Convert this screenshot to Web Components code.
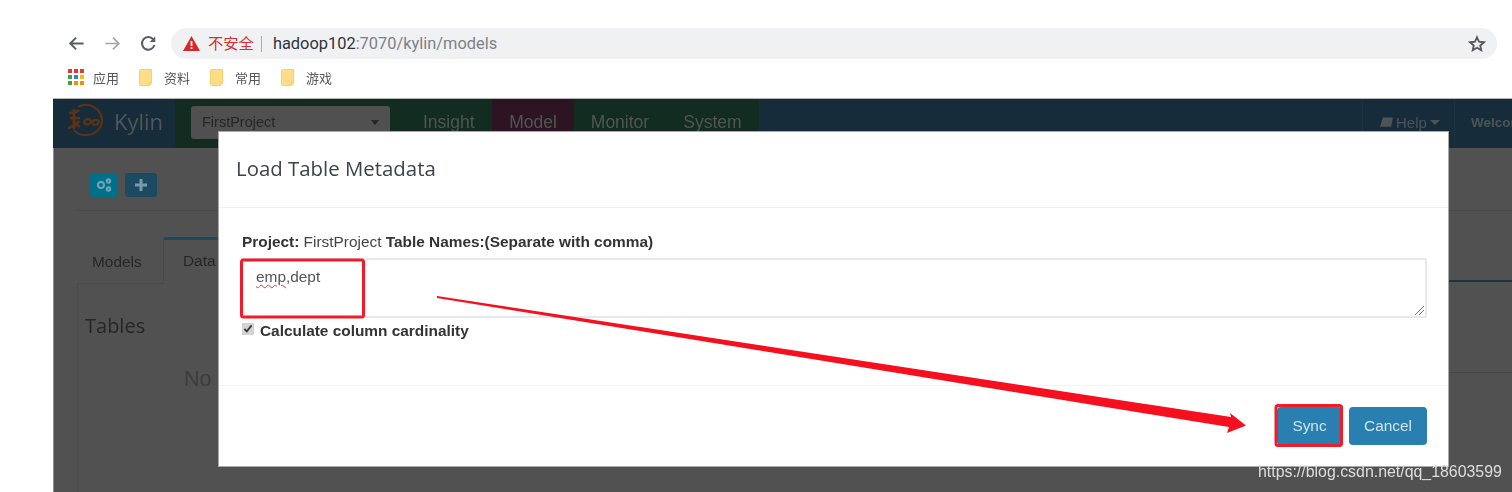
<!DOCTYPE html>
<html>
<head>
<meta charset="utf-8">
<title>Load Table Metadata</title>
<style>
  html, body { margin: 0; height: 100%; background: #fff; overflow: hidden; }
  body { font-family: "Liberation Sans", "Noto Sans CJK SC", sans-serif; }
</style>
</head>
<body>
<browser-bar></browser-bar>
<kylin-page>
  <load-dialog></load-dialog>
</kylin-page>
<red-marks></red-marks>

<script>
class BrowserBar extends HTMLElement {
  constructor() {
    super();
    this.attachShadow({ mode: "open" });
  }

  static get styles() {
    return /* css */`
      :host {
        display: block;
        height: 98px;
        box-sizing: border-box;
        padding: 28px 15px 0 67px;
        filter: blur(.5px);
      }
      .top {
        display: flex;
        align-items: center;
        height: 31px;
      }
      .nav {
        display: flex;
        gap: 17px;
        width: 104px;
      }
      .nav svg { width: 19px; height: 19px; }
      .url {
        flex: 1;
        display: flex;
        align-items: center;
        height: 31px;
        border-radius: 16px;
        background: #eff1f3;
        padding: 0 11px 0 12px;
        font: 16.4px "Roboto", "Noto Sans CJK SC", sans-serif;
      }
      .warn {
        color: #d3302f;
        font-size: 15.3px;
        margin-left: 8px;
        padding-right: 7px;
        border-right: 1px solid #a9abad;
        line-height: 16px;
      }
      .host { color: #30343a; margin-left: 11px; }
      .path { color: #7d8186; }
      .star { margin-left: auto; width: 18px; height: 18px; }
      .marks {
        display: flex;
        align-items: center;
        height: 24px;
        margin-top: 6px;
        font: 13px "Noto Sans CJK SC", sans-serif;
        color: #55585c;
      }
      .apps {
        display: grid;
        grid-template-columns: repeat(3, 4px);
        grid-auto-rows: 4px;
        gap: 2px;
        margin-right: 9px;
        margin-left: 1px;
      }
      .apps i { display: block; }
      .mark {
        display: flex;
        align-items: center;
        gap: 11px;
        margin-left: 20px;
      }
      .mark svg { width: 14px; height: 17px; }
    `;
  }

  connectedCallback() {
    const appColors = ["#e53935", "#e53935", "#e53935", "#43a047", "#2f80ed", "#fbbc05", "#43a047", "#fb8c00", "#fb8c00"];
    const folders = ["资料", "常用", "游戏"];
    this.shadowRoot.innerHTML = /* html */`
    <style>${BrowserBar.styles}</style>
    <div class="top">
      <div class="nav">
        <svg viewBox="0 0 24 24" fill="none" stroke="#5a5d61" stroke-width="2.4"><path d="M21 12H4M11.5 4.5 4 12l7.5 7.5"/></svg>
        <svg viewBox="0 0 24 24" fill="none" stroke="#a4a6a9" stroke-width="2.2"><path d="M3 12h17M12.5 4.5 20 12l-7.5 7.5"/></svg>
        <svg viewBox="0 0 24 24" fill="none" stroke="#5a5d61" stroke-width="2.6"><path d="M19.5 14a8 8 0 1 1-1.600-7.400"/><path d="M20.5 3v7h-7" fill="#5a5d61" stroke="none"/></svg>
      </div>
      <div class="url">
        <svg width="17" height="15" viewBox="0 0 17 15"><path d="M8.500 0 17 15H0z" fill="#d9262a"/><path d="M7.600 5h1.800v5H7.600zM7.600 11h1.800v2H7.600z" fill="#fff"/></svg>
        <span class="warn">不安全</span>
        <span class="host">hadoop102<span class="path">:7070/kylin/models</span></span>
        <svg class="star" viewBox="0 0 24 24" fill="none" stroke="#55585c" stroke-width="2.4"><path d="m12 3 2.700 6 6.500.7-4.900 4.300 1.400 6.400L12 17.100 6.300 20.400l1.400-6.400-4.900-4.300 6.500-.7z"/></svg>
      </div>
    </div>
    <div class="marks">
      <div class="apps">${appColors.map(c => `<i style="background:${c}"></i>`).join("")}</div>
      <span>应用</span>
      ${folders.map(name => `
      <div class="mark">
        <svg viewBox="0 0 14 17"><path d="M1.500.5h11v14l-2 2h-9a1 1 0 0 1-1-1v-14a1 1 0 0 1 1-1z" fill="#fedd86" stroke="#f8cf6a"/><path d="M13 13h-3v3" fill="none" stroke="#f8cf6a"/></svg>
        <span>${name}</span>
      </div>`).join("")}
    </div>`;
  }
}

class KylinPage extends HTMLElement {
  constructor() {
    super();
    this.attachShadow({ mode: "open" });
  }

  static get styles() {
    return /* css */`
      :host {
        display: block;
        height: 394px;
        margin-left: 53px;
        background: #515151;
        position: relative;
        overflow: hidden;
        border-top: 1px solid #b5b5b5;
        box-sizing: border-box;
        box-shadow: inset 1px 0 #8d8d8d;
        filter: blur(.5px);
      }
      header {
        display: flex;
        height: 49px;
        background: #162c3a;
        color: #4d5356;
        font-size: 17.5px;
      }
      .brand {
        display: flex;
        align-items: center;
        gap: 10px;
        width: 122px;
        box-sizing: border-box;
        padding: 0 0 5px 13px;
        font: 22px "Open Sans", sans-serif;
        color: #50565a;
      }
      .green {
        display: flex;
        background: #122c22;
        width: 317px;
        padding-left: 16px;
        box-sizing: border-box;
        align-items: center;
      }
      .project {
        display: flex;
        align-items: center;
        justify-content: space-between;
        width: 199px;
        height: 33px;
        margin-bottom: 3px;
        box-sizing: border-box;
        padding: 0 11px 0 11px;
        border-radius: 3px;
        background: #505050;
        color: #262626;
        font-size: 14.5px;
      }
      .project::after {
        content: "";
        border: 4px solid transparent;
        border-top: 5px solid #262626;
        border-bottom: 0;
      }
      .green .insight {
        margin-left: 33px;
        padding-bottom: 3px;
      }
      .item {
        display: flex;
        align-items: center;
        justify-content: center;
        padding-bottom: 3px;
        box-sizing: border-box;
        color: #4f5553;
      }
      .model { background: #2d1422; width: 82px; }
      .monitor { background: #122c22; width: 92px; }
      .system { background: #122c22; width: 93px; }
      .right {
        margin-left: auto;
        display: flex;
        font-size: 15px;
      }
      .help {
        display: flex;
        align-items: center;
        gap: 3px;
        width: 93px;
        padding: 0 0 2px 17px;
        box-sizing: border-box;
        border-left: 1px solid #1b3340;
        border-right: 1px solid #1b3340;
      }
      .help::after {
        content: "";
        border: 5px solid transparent;
        border-top: 5px solid #4d5356;
        border-bottom: 0;
      }
      .welcome {
        width: 41px;
        overflow: hidden;
        white-space: nowrap;
        padding: 16px 0 0 16px;
        font-size: 13.5px;
        font-weight: bold;
      }
      main {
        padding: 25px 0 0 24px;
      }
      .tools { display: flex; gap: 7px; margin-left: 13px; }
      .tools span {
        display: flex;
        align-items: center;
        justify-content: center;
        height: 24px;
        border-radius: 3px;
      }
      .tools .teal { width: 28px; background: #006f8a; }
      .tools .blue { width: 32px; background: #1c4a63; }
      .rule { border-top: 1px solid #4a4a4a; margin-top: 13px; }
      .tabs { display: flex; margin-top: 26px; color: #262626; font-size: 15.4px; }
      .tab {
        height: 47px;
        box-sizing: border-box;
        padding: 16px 14px 0 15px;
      }
      .tab.models { width: 87px; border-right: 1px solid #4a4a4a; border-bottom: 1px solid #4a4a4a; }
      .tab.data {
        width: 200px;
        border-top: 3px solid #1c4a63;
        padding-top: 12px;
        padding-left: 19px;
      }
      .tab-rest {
        flex: 1;
        height: 45px;
        border-bottom: 2px solid #1c3545;
        box-sizing: border-box;
      }
      .panel {
        height: 220px;
        border-left: 1px solid #4a4a4a;
        padding-top: 27px;
        padding-left: 7px;
        color: #262626;
      }
      h2 { margin: 0; font: 20px/30px "Open Sans", sans-serif; }
      .line {
        width: 64px;
        margin-left: auto;
        margin-top: 31px;
        border-top: 1px solid #474747;
      }
      .none { margin: -6px 0 0 99px; font: 21.5px "Liberation Sans", sans-serif; color: #3c3c3c; }
    `;
  }

  connectedCallback() {
    this.shadowRoot.innerHTML = /* html */`
    <style>${KylinPage.styles}</style>
    <header>
      <div class="brand">
        <svg width="38" height="36" viewBox="0 0 38 36" fill="none" stroke="#5e3314" stroke-width="2"><path d="M12 4a16 16 0 0 1 24 13c0 9-8 16-18 15-4 0-8-2-10-5"/><path d="M3 10c4 0 8-1 10-3M4 15h10M8 6v20M2 25c4-1 8-3 11-7M8 20l6 4" stroke-width="2.600"/><path d="M18 20c1-5 6-5 7-1-1 3-5 3-7 1zM26 20c1-4 6-4 7-1-1 3-5 4-7 1z" stroke-width="2.200"/></svg>
        <span>Kylin</span>
      </div>
      <div class="green">
        <div class="project">FirstProject</div>
        <div class="item insight">Insight</div>
      </div>
      <div class="item model">Model</div>
      <div class="item monitor">Monitor</div>
      <div class="item system">System</div>
      <div class="right">
        <div class="help"><svg width="13" height="12" viewBox="0 0 14 12"><path d="M3 0h11l-2 10H0z" fill="#4d5356"/></svg>Help</div>
        <div class="welcome">Welcome</div>
      </div>
    </header>
    <main>
      <div class="tools">
        <span class="teal"><svg width="16" height="14" viewBox="0 0 16 14" fill="none" stroke="#6fa6b6" stroke-width="2"><circle cx="5" cy="7" r="3"/><circle cx="12.500" cy="3" r="1.700"/><circle cx="12.500" cy="11" r="1.700"/></svg></span>
        <span class="blue"><svg width="12" height="12" viewBox="0 0 12 12"><path d="M4.500 0h3v4.500H12v3H7.500V12h-3V7.500H0v-3h4.500z" fill="#7a99aa"/></svg></span>
      </div>
      <div class="rule"></div>
      <div class="tabs">
        <div class="tab models">Models</div>
        <div class="tab data">Data</div>
        <div class="tab-rest"></div>
      </div>
      <div class="panel">
        <h2>Tables</h2>
        <div class="line"></div>
        <div class="none">No</div>
      </div>
    </main>
    <slot></slot>`;
  }
}

class LoadDialog extends HTMLElement {
  constructor() {
    super();
    this.attachShadow({ mode: "open" });
  }

  static get styles() {
    return /* css */`
      :host {
        position: absolute;
        left: 166px;
        top: 33px;
        width: 1229px;
        height: 334px;
        display: flex;
        flex-direction: column;
        background: #fff;
        box-shadow: 0 0 0 1px #a9a9a9;
        color: #333;
        font-size: 15.4px;
      }
      .head {
        height: 76px;
        box-sizing: border-box;
        padding: 21px 17px 0;
        border-bottom: 1px solid #f1f1f1;
        font: 20.4px/30px "Open Sans", sans-serif;
        color: #3c434a;
      }
      .body {
        height: 178px;
        box-sizing: border-box;
        padding: 25px 21px 0 22px;
        border-bottom: 1px solid #f4f4f4;
      }
      .label { color: #444; line-height: 18px; padding-left: 1px; }
      .label b { color: #333; }
      .box {
        height: 60px;
        box-sizing: border-box;
        margin-top: 7px;
        padding: 8px 13px;
        border: 2px solid #e7e7ef;
        position: relative;
        color: #555;
      }
      .box u { text-decoration: underline wavy #e03b3b 1px; text-underline-offset: 2px; }
      .grip {
        position: absolute;
        right: 1px;
        bottom: 1px;
        width: 10px;
        height: 10px;
      }
      .check {
        display: flex;
        align-items: center;
        gap: 6px;
        margin-top: 4px;
        padding-left: 1px;
        font-weight: bold;
      }
      .check input { margin: 0 0 4px; width: 12px; height: 12px; accent-color: #d4d4d4; }
      .foot {
        flex: 1;
        display: flex;
        justify-content: flex-end;
        gap: 7px;
        padding: 21px 21px 0 0;
      }
      .foot span {
        display: flex;
        align-items: center;
        justify-content: center;
        height: 38px;
        border-radius: 4px;
        background: #2980b0;
        color: #cfe3ee;
      }
      .sync { width: 65px; }
      .cancel { width: 78px; }
    `;
  }

  connectedCallback() {
    this.shadowRoot.innerHTML = /* html */`
    <style>${LoadDialog.styles}</style>
    <div class="head">Load Table Metadata</div>
    <div class="body">
      <div class="label"><b>Project:</b> FirstProject <b>Table Names:(Separate with comma)</b></div>
      <div class="box">
        <u>emp</u>,dept
        <svg class="grip" viewBox="0 0 10 10" stroke="#777" stroke-width="1"><path d="M1 10 10 1M5 10l5-5"/></svg>
      </div>
      <label class="check"><input type="checkbox" checked>Calculate column cardinality</label>
    </div>
    <div class="foot">
      <span class="sync">Sync</span>
      <span class="cancel">Cancel</span>
    </div>`;
  }
}

// red boxes, arrow and the watermark sit on top of the screenshot
class RedMarks extends HTMLElement {
  constructor() {
    super();
    this.attachShadow({ mode: "open" });
  }

  static get styles() {
    return /* css */`
      :host {
        position: fixed;
        inset: 0;
        pointer-events: none;
      }
      svg { position: absolute; inset: 0; filter: blur(.4px); }
      .stamp {
        position: absolute;
        left: 1258px;
        top: 463px;
        font: 15.9px "Liberation Sans", sans-serif;
        color: #dedede;
      }
    `;
  }

  connectedCallback() {
    this.shadowRoot.innerHTML = /* html */`
    <style>${RedMarks.styles}</style>
    <svg width="1512" height="492" viewBox="0 0 1512 492" fill="none">
      <rect x="241.500" y="260" width="122" height="57" rx="2" stroke="#f01c2a" stroke-width="3"/>
      <rect x="1276" y="405.500" width="65.500" height="40" rx="2" stroke="#f01c2a" stroke-width="3"/>
      <path d="M437 296 1231 417 1230 413 1246 425.500 1227 433 1229 427 437 298Z" fill="#f5101f"/>
    </svg>
    <div class="stamp">https://blog.csdn.net/qq_18603599</div>`;
  }
}

customElements.define("browser-bar", BrowserBar);
customElements.define("kylin-page", KylinPage);
customElements.define("load-dialog", LoadDialog);
customElements.define("red-marks", RedMarks);
</script>
</body>
</html>
